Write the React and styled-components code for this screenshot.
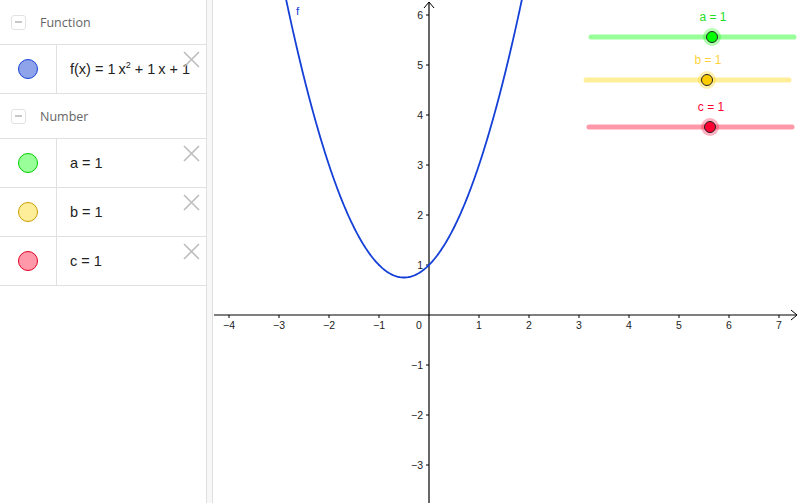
import React from "react";
import styled, { createGlobalStyle } from "styled-components";

const GlobalStyle = createGlobalStyle`
  html, body { margin: 0; padding: 0; background: #fff; }
  body { font-family: "Open Sans", "Liberation Sans", sans-serif; }
`;

const Shell = styled.div`
  display: flex;
  width: 800px;
  height: 503px;
  overflow: hidden;
  background: #fff;
`;

const AlgebraPanel = styled.aside`
  width: 206px;
  flex: none;
  display: flex;
  flex-direction: column;
`;

const Splitter = styled.div`
  width: 5px;
  flex: none;
  background: #f7f7f7;
  border-left: 1px solid #e0e0e0;
  border-right: 1px solid #e0e0e0;
`;

const GraphView = styled.div`
  flex: 1;
  position: relative;
`;

const GroupHeader = styled.div`
  height: 44px;
  display: flex;
  align-items: center;
  gap: 14px;
  padding-left: 11px;
  border-bottom: 1px solid #e0e0e0;
  font-size: 12.5px;
  color: #666;
`;

const Collapse = styled.span`
  width: 13px;
  height: 13px;
  border: 1px solid #e2e2e2;
  border-radius: 3px;
  display: flex;
  align-items: center;
  justify-content: center;
  &::after {
    content: "";
    width: 7px;
    height: 2px;
    background: #c8c8c8;
  }
`;

const ItemRow = styled.div`
  position: relative;
  height: 48px;
  display: flex;
  border-bottom: 1px solid #e0e0e0;
`;

const Marble = styled.div`
  width: 56px;
  flex: none;
  border-right: 1px solid #e0e0e0;
  display: flex;
  align-items: center;
  justify-content: center;
  &::before {
    content: "";
    width: 18px;
    height: 18px;
    border-radius: 50%;
    background: ${(p) => p.$fill};
    border: 1px solid ${(p) => p.$stroke};
  }
`;

const Formula = styled.div`
  display: flex;
  align-items: center;
  padding-left: 13px;
  font-family: "Liberation Sans", Arial, sans-serif;
  font-size: 14.5px;
  color: #222;
  white-space: pre;
  sup {
    font-size: 9px;
    position: relative;
    top: -4px;
  }
`;

const CloseButton = styled.svg`
  position: absolute;
  top: 6px;
  right: 6px;
  width: 17px;
  height: 17px;
`;

const Close = () => (
  <CloseButton viewBox="0 0 17 17">
    <path d="M1 1 L16 16 M16 1 L1 16" stroke="#bdbdbd" strokeWidth="1.6" fill="none" />
  </CloseButton>
);

const Plot = styled.svg`
  display: block;
  width: 100%;
  height: 100%;
  font-family: "Liberation Sans", Arial, sans-serif;
`;

const OX = 429;
const OY = 315;
const U = 50;

const numbers = [
  { name: "a", fill: "#99ff99", stroke: "#00cc00", text: "#22dd22", knob: "#00ff00", y: 37, x1: 591, x2: 794, kx: 712 },
  { name: "b", fill: "#ffee99", stroke: "#c89c00", text: "#ffd23c", knob: "#ffcc00", y: 80, x1: 586, x2: 789, kx: 707 },
  { name: "c", fill: "#ff99aa", stroke: "#dd0022", text: "#ff0033", knob: "#ff0033", y: 127, x1: 589, x2: 792, kx: 710 },
];

const curve = () => {
  const pts = [];
  for (let x = -2.9; x <= 1.9; x += 0.02) {
    const y = x * x + x + 1;
    pts.push(`${(OX + x * U).toFixed(2)},${(OY - y * U).toFixed(2)}`);
  }
  return "M" + pts.join(" L");
};

const minus = (n) => (n < 0 ? "\u2212" + Math.abs(n) : String(n));

const Graph = () => {
  const xs = [-4, -3, -2, -1, 1, 2, 3, 4, 5, 6, 7];
  const ys = [-3, -2, -1, 1, 2, 3, 4, 5, 6];
  return (
    <Plot viewBox="213 0 587 503">
      <line x1="214" y1={OY} x2="797" y2={OY} stroke="#000" strokeWidth="1.2" />
      <path d={`M791 ${OY - 5} L797 ${OY} L791 ${OY + 5}`} stroke="#000" fill="none" strokeWidth="1" />
      <line x1={OX} y1="2" x2={OX} y2="503" stroke="#000" strokeWidth="1.2" />
      <path d={`M${OX - 5} 8 L${OX} 2 L${OX + 5} 8`} stroke="#000" fill="none" strokeWidth="1" />
      {xs.map((n) => (
        <g key={"x" + n}>
          <line x1={OX + n * U} y1={OY} x2={OX + n * U} y2={OY + 3} stroke="#000" />
          <text x={OX + n * U} y={OY + 14} fontSize="10.5" textAnchor="middle" fill="#222">
            {minus(n)}
          </text>
        </g>
      ))}
      <text x={OX - 10} y={OY + 14} fontSize="10.5" textAnchor="middle" fill="#222">0</text>
      {ys.map((n) => (
        <g key={"y" + n}>
          <line x1={OX - 3} y1={OY - n * U} x2={OX} y2={OY - n * U} stroke="#000" />
          <text x={OX - 6} y={OY - n * U + 4} fontSize="10.5" textAnchor="end" fill="#222">
            {minus(n)}
          </text>
        </g>
      ))}
      <path d={curve()} stroke="#1540d8" strokeWidth="1.8" fill="none" />
      <text x="296" y="15" fontSize="11.5" fill="#1540d8">f</text>
      {numbers.map((s) => (
        <g key={s.name}>
          <text x={s.kx + 1} y={s.y - 16} fontSize="12" textAnchor="middle" fill={s.text}>
            {s.name} = 1
          </text>
          <line x1={s.x1} y1={s.y} x2={s.x2} y2={s.y} stroke={s.fill} strokeWidth="5" strokeLinecap="round" />
          <circle cx={s.kx} cy={s.y} r="9" fill={s.knob} opacity="0.3" />
          <circle cx={s.kx} cy={s.y} r="5.5" fill={s.knob} stroke="#222" strokeWidth="1" />
        </g>
      ))}
    </Plot>
  );
};

const App = () => (
  <>
    <GlobalStyle />
    <Shell>
      <AlgebraPanel>
        <GroupHeader>
          <Collapse />
          Function
        </GroupHeader>
        <ItemRow>
          <Marble $fill="#8fa3ea" $stroke="#1540d8" />
          <Formula>
            f(x) = 1{"\u2009"}x<sup>2</sup> + 1{"\u2009"}x + 1
          </Formula>
          <Close />
        </ItemRow>
        <GroupHeader>
          <Collapse />
          Number
        </GroupHeader>
        {numbers.map((n) => (
          <ItemRow key={n.name}>
            <Marble $fill={n.fill} $stroke={n.stroke} />
            <Formula>{n.name} = 1</Formula>
            <Close />
          </ItemRow>
        ))}
      </AlgebraPanel>
      <Splitter />
      <GraphView>
        <Graph />
      </GraphView>
    </Shell>
  </>
);

export default App;
